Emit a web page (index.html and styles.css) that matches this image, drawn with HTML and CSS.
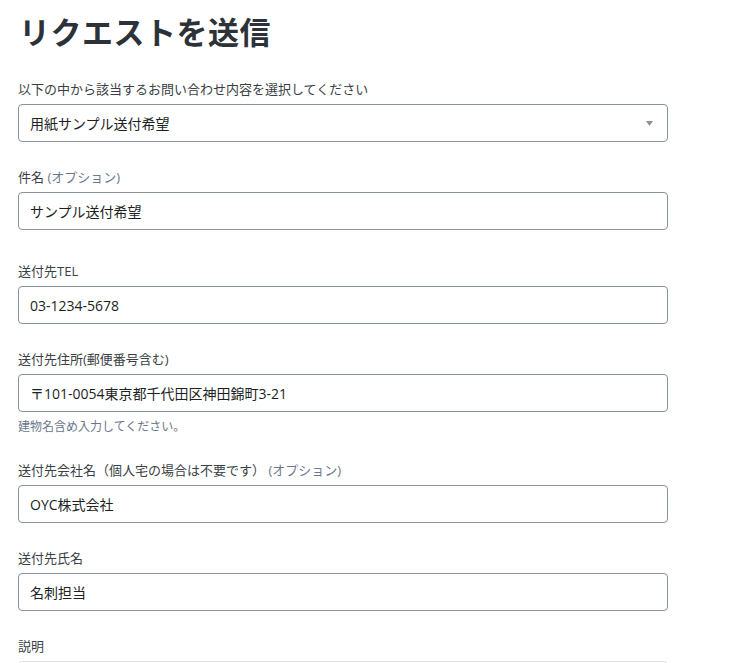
FILE: index.html
```html
<!DOCTYPE html>
<html lang="ja">
<head>
<meta charset="utf-8">
<title>リクエストを送信</title>
<link rel="stylesheet" href="styles.css">
</head>
<body>
<div class="page">
  <h1 class="title">リクエストを送信</h1>
  <form class="form">
    <div class="field">
      <label class="label">以下の中から該当するお問い合わせ内容を選択してください</label>
      <div class="control select">
        <span class="value">用紙サンプル送付希望</span>
        <svg class="caret" width="7" height="5" viewBox="0 0 7 5"><path d="M0 0H7L3.5 5Z" fill="#8a93a0"/></svg>
      </div>
    </div>
    <div class="field field-wide">
      <label class="label">件名 <span class="opt">(オプション)</span></label>
      <div class="control"><span class="value">サンプル送付希望</span></div>
    </div>
    <div class="field">
      <label class="label">送付先TEL</label>
      <div class="control"><span class="value">03-1234-5678</span></div>
    </div>
    <div class="field">
      <label class="label">送付先住所(郵便番号含む)</label>
      <div class="control"><span class="value">〒101-0054東京都千代田区神田錦町3-21</span></div>
      <div class="help">建物名含め入力してください。</div>
    </div>
    <div class="field">
      <label class="label">送付先会社名（個人宅の場合は不要です） <span class="opt">(オプション)</span></label>
      <div class="control"><span class="value">OYC株式会社</span></div>
    </div>
    <div class="field">
      <label class="label">送付先氏名</label>
      <div class="control"><span class="value">名刺担当</span></div>
    </div>
    <div class="field">
      <label class="label">説明</label>
      <div class="editor"></div>
    </div>
  </form>
</div>
</body>
</html>
```
FILE: styles.css
```css
html, body {
  margin: 0;
  padding: 0;
  background: #ffffff;
}
body {
  font-family: "Open Sans", "Noto Sans CJK JP", sans-serif;
  color: #333333;
}
.page {
  padding: 0 0 0 18px;
  width: 650px;
  overflow: hidden;
  height: 663px;
}
.title {
  margin: 13px 0 0 1px;
  font-size: 31px;
  line-height: 36px;
  font-weight: 700;
  color: #2c3238;
  font-family: "Noto Sans CJK JP", sans-serif;
  letter-spacing: 0.5px;
}
.form {
  margin-top: 32px;
}
.field {
  margin-bottom: 27px;
}
.field-wide {
  margin-bottom: 33px;
}
.label {
  display: block;
  font-size: 13px;
  line-height: 16px;
  color: #3a3f45;
  margin-bottom: 7px;
}
.opt {
  color: #6b778c;
}
.control {
  box-sizing: border-box;
  height: 38px;
  border: 1px solid #8993a0;
  border-radius: 4px;
  display: flex;
  align-items: center;
  padding: 0 11px;
  font-size: 14px;
  color: #1c1f23;
}
.select {
  justify-content: space-between;
  padding-right: 14px;
}
.caret {
  display: block;
}
.help {
  font-size: 12px;
  line-height: 16px;
  color: #6b778c;
  margin-top: 7px;
}
.editor {
  box-sizing: border-box;
  height: 60px;
  border: 1px solid #dcdfe4;
  border-radius: 4px;
}
```
